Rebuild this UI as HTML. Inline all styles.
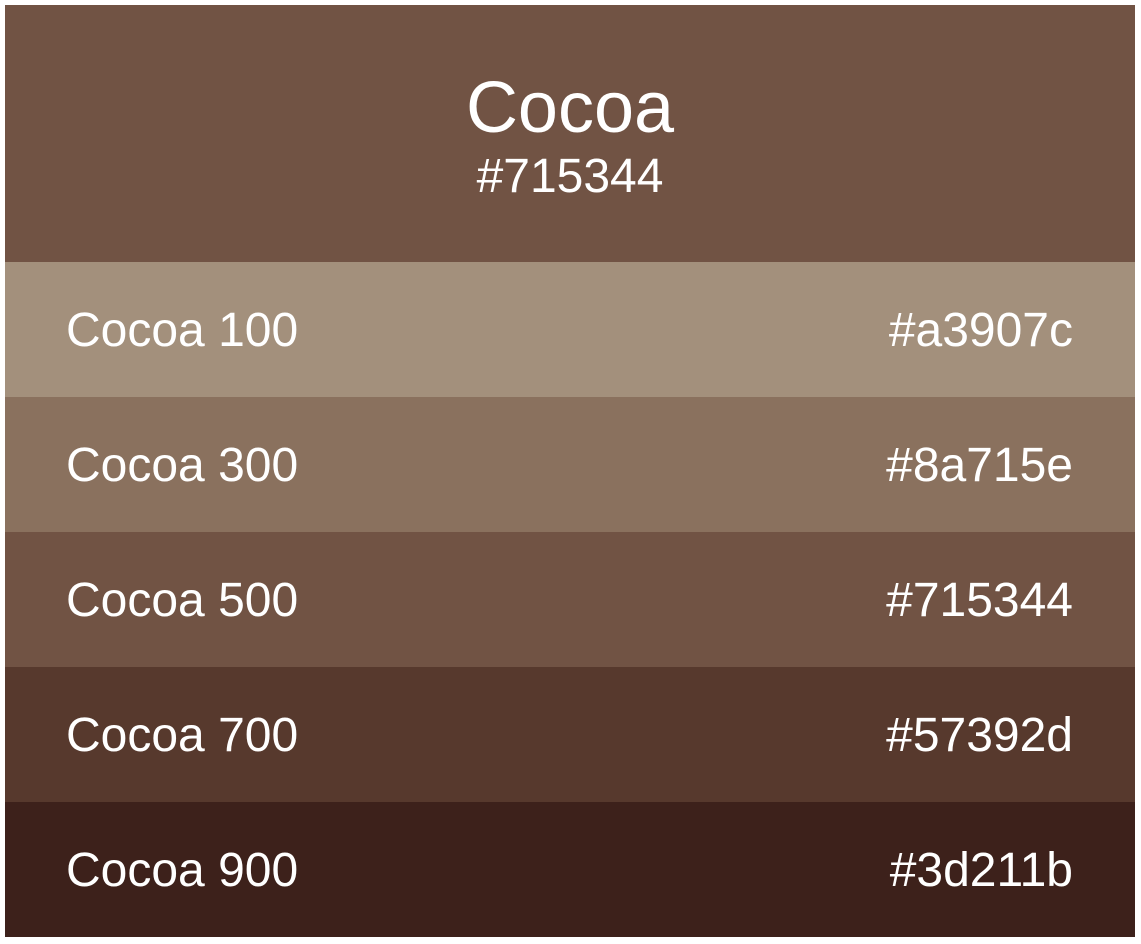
<!DOCTYPE html>
<html><head><style>
body{margin:0;background:#fff;width:1141px;height:944px;overflow:hidden;font-family:"Liberation Sans",sans-serif;color:#fff}
.w{position:absolute;left:5px;top:5px;width:1130px}
.h{height:257px;background:#715344;position:relative;text-align:center}
.h .t{position:absolute;left:0;right:0;top:64px;font-size:72px;line-height:78px}
.h .c{position:absolute;left:0;right:0;top:148px;font-size:48px;line-height:48px}
.r{height:135px;position:relative;font-size:48px}
.r span{position:absolute;top:44px;line-height:50px}
.r .a{left:61px}.r .b{right:62px}
</style></head><body><div class="w">
<div class="h"><div class="t">Cocoa</div><div class="c">#715344</div></div>
<div class="r" style="background:#a3907c"><span class="a">Cocoa 100</span><span class="b">#a3907c</span></div>
<div class="r" style="background:#8a715e"><span class="a">Cocoa 300</span><span class="b">#8a715e</span></div>
<div class="r" style="background:#715344"><span class="a">Cocoa 500</span><span class="b">#715344</span></div>
<div class="r" style="background:#57392d"><span class="a">Cocoa 700</span><span class="b">#57392d</span></div>
<div class="r" style="background:#3d211b"><span class="a">Cocoa 900</span><span class="b">#3d211b</span></div>
</div></body></html>
